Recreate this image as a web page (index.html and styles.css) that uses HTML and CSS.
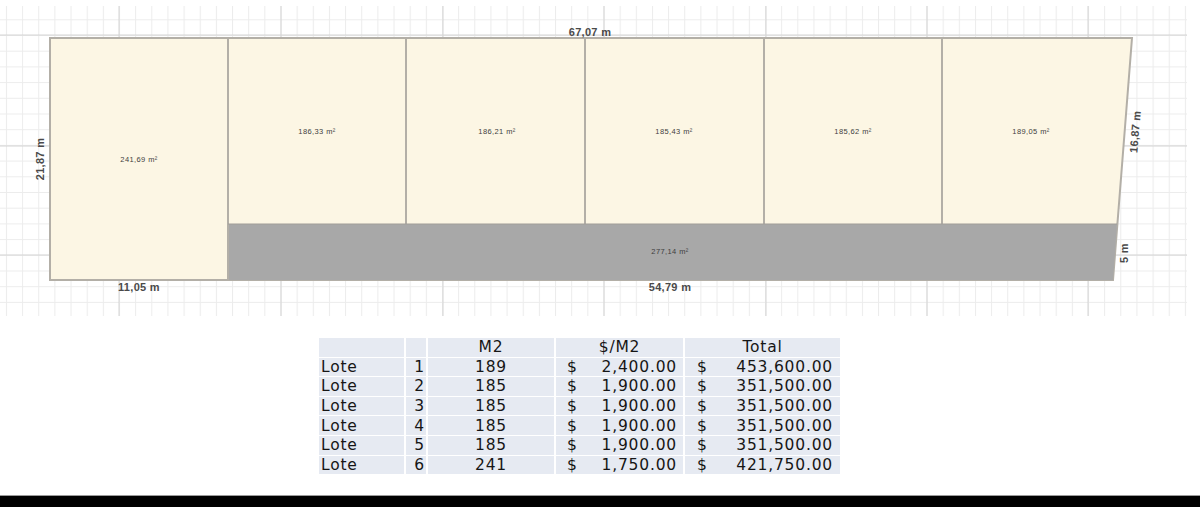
FILE: index.html
```html
<!DOCTYPE html>
<html lang="es">
<head>
<meta charset="utf-8">
<title>Plano de lotes</title>
<link rel="stylesheet" href="styles.css">
</head>
<body>
<div class="page">
  <div class="plan">
    <svg class="plan-svg" width="1200" height="320" viewBox="0 0 1200 320" xmlns="http://www.w3.org/2000/svg">
      <defs>
        <pattern id="minor" patternUnits="userSpaceOnUse" x="5.95" y="3.6" width="16.15" height="15.7">
          <path d="M0.5 0 V15.7 M0 0.5 H16.15" stroke="#ececec" stroke-width="1" fill="none"/>
        </pattern>
      </defs>
      <rect x="0" y="6" width="1187" height="310" fill="url(#minor)"/>
      <g stroke="#d4d4d4" stroke-width="1">
        <line x1="119" y1="6" x2="119" y2="316"/>
        <line x1="281" y1="6" x2="281" y2="316"/>
        <line x1="443" y1="6" x2="443" y2="316"/>
        <line x1="604" y1="6" x2="604" y2="316"/>
        <line x1="766" y1="6" x2="766" y2="316"/>
        <line x1="927" y1="6" x2="927" y2="316"/>
        <line x1="1088" y1="6" x2="1088" y2="316"/>
        <line x1="0" y1="35" x2="1187" y2="35"/>
        <line x1="0" y1="146" x2="1187" y2="146"/>
        <line x1="0" y1="255" x2="1187" y2="255"/>
      </g>
      <polygon points="50,38 1132,38 1113,280 50,280" fill="#fcf6e4" stroke="#b3afa7" stroke-width="2"/>
      <polygon points="229,224 1117,224 1113,280 229,280" fill="#a8a8a8"/>
      <g stroke="#b3afa7" stroke-width="2">
        <line x1="228" y1="38" x2="228" y2="280"/>
        <line x1="406" y1="38" x2="406" y2="224"/>
        <line x1="585" y1="38" x2="585" y2="224"/>
        <line x1="764" y1="38" x2="764" y2="224"/>
        <line x1="942" y1="38" x2="942" y2="224"/>
        <line x1="228" y1="224" x2="1117" y2="224" stroke="#a09d98" stroke-width="1"/>
      </g>
      <g class="area" text-anchor="middle">
        <text x="139" y="162">241,69 m²</text>
        <text x="317" y="134">186,33 m²</text>
        <text x="497" y="134">186,21 m²</text>
        <text x="674" y="134">185,43 m²</text>
        <text x="853" y="134">185,62 m²</text>
        <text x="1031" y="134">189,05 m²</text>
        <text x="670" y="254">277,14 m²</text>
      </g>
      <g class="dim" text-anchor="middle">
        <text x="590" y="36">67,07 m</text>
        <text x="139" y="291">11,05 m</text>
        <text x="670" y="291">54,79 m</text>
        <text x="44" y="159" transform="rotate(-90 44 159)">21,87 m</text>
        <text x="1139" y="132" transform="rotate(-85 1139 132)">16,87 m</text>
        <text x="1128" y="253" transform="rotate(-90 1128 253)">5 m</text>
      </g>
    </svg>
  </div>

  <table class="price-table">
    <colgroup>
      <col class="c-name">
      <col class="c-num">
      <col class="c-m2">
      <col class="c-pm2">
      <col class="c-total">
    </colgroup>
    <thead>
      <tr>
        <th></th>
        <th></th>
        <th>M2</th>
        <th>$/M2</th>
        <th>Total</th>
      </tr>
    </thead>
    <tbody>
      <tr>
        <td class="name">Lote</td><td class="num">1</td><td class="m2">189</td>
        <td><div class="money pm2"><span>$</span><span>2,400.00</span></div></td>
        <td><div class="money tot"><span>$</span><span>453,600.00</span></div></td>
      </tr>
      <tr>
        <td class="name">Lote</td><td class="num">2</td><td class="m2">185</td>
        <td><div class="money pm2"><span>$</span><span>1,900.00</span></div></td>
        <td><div class="money tot"><span>$</span><span>351,500.00</span></div></td>
      </tr>
      <tr>
        <td class="name">Lote</td><td class="num">3</td><td class="m2">185</td>
        <td><div class="money pm2"><span>$</span><span>1,900.00</span></div></td>
        <td><div class="money tot"><span>$</span><span>351,500.00</span></div></td>
      </tr>
      <tr>
        <td class="name">Lote</td><td class="num">4</td><td class="m2">185</td>
        <td><div class="money pm2"><span>$</span><span>1,900.00</span></div></td>
        <td><div class="money tot"><span>$</span><span>351,500.00</span></div></td>
      </tr>
      <tr>
        <td class="name">Lote</td><td class="num">5</td><td class="m2">185</td>
        <td><div class="money pm2"><span>$</span><span>1,900.00</span></div></td>
        <td><div class="money tot"><span>$</span><span>351,500.00</span></div></td>
      </tr>
      <tr>
        <td class="name">Lote</td><td class="num">6</td><td class="m2">241</td>
        <td><div class="money pm2"><span>$</span><span>1,750.00</span></div></td>
        <td><div class="money tot"><span>$</span><span>421,750.00</span></div></td>
      </tr>
    </tbody>
  </table>

  <div class="bottom-bar"></div>
</div>
</body>
</html>
```

FILE: styles.css
```css
html, body {
  margin: 0;
  padding: 0;
  background: #ffffff;
}

.page {
  width: 1200px;
  height: 507px;
  display: flex;
  flex-direction: column;
  overflow: hidden;
  background: #ffffff;
}

.plan {
  height: 320px;
  flex: none;
}

.plan-svg {
  display: block;
}

.area {
  font-family: "Liberation Sans", Arial, sans-serif;
  font-size: 7.5px;
  fill: #3e3e3e;
  letter-spacing: 0.4px;
}

.dim {
  font-family: "Liberation Sans", Arial, sans-serif;
  font-size: 11px;
  font-weight: bold;
  fill: #4a4a4a;
  letter-spacing: 0.3px;
}

.price-table {
  flex: none;
  margin: 17px 0 0 317px;
  border-collapse: separate;
  border-spacing: 2px 1px;
  table-layout: fixed;
  width: 525px;
  font-family: "DejaVu Sans", Verdana, sans-serif;
  font-size: 15.5px;
  letter-spacing: 0.8px;
  color: #161616;
}

.c-name { width: 85px; }
.c-num { width: 20px; }
.c-m2 { width: 126px; }
.c-pm2 { width: 127px; }
.c-total { width: 155px; }

.price-table th,
.price-table td {
  background: #e6eaf2;
  height: 18.6px;
  padding: 0;
  line-height: 18px;
  font-weight: normal;
  white-space: nowrap;
}

.price-table th {
  text-align: center;
}

.name {
  text-align: left;
  padding-left: 2px !important;
}

.num {
  text-align: right;
  padding-right: 1px !important;
}

.m2 {
  text-align: center;
}

.money {
  display: flex;
  justify-content: space-between;
}

.pm2 {
  padding: 0 6px 0 11px;
}

.tot {
  padding: 0 7px 0 12px;
}

.bottom-bar {
  margin-top: auto;
  height: 11px;
  background: #000000;
  border-top: 1px solid #9a9a9a;
  flex: none;
}
```
